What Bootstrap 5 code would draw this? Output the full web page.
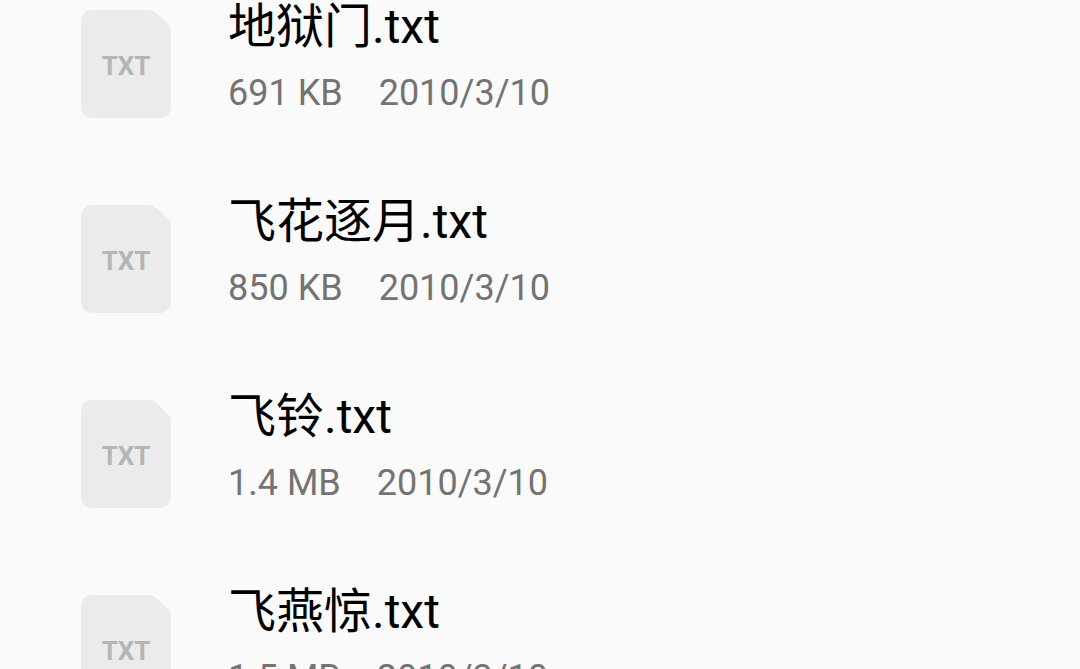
<!DOCTYPE html>
<html lang="zh-CN">
<head>
<meta charset="utf-8">
<meta name="viewport" content="width=device-width, initial-scale=1">
<title>TXT</title>
<link href="https://cdn.jsdelivr.net/npm/bootstrap@5.3.0/dist/css/bootstrap.min.css" rel="stylesheet">
<style>
body { background: #fafafa; font-family: Roboto, "Noto Sans CJK SC", sans-serif; }
.file-list { height: 100vh; }
.file-row { gap: 56px; height: 195px; padding: 0 80px; }
.file-icon { width: 92px; height: 108px; margin-top: 10px; }
.file-icon text { font: 700 26px Roboto, sans-serif; fill: #b5b5b5; }
.file-name { font-size: 48px; line-height: 54px; color: #000; }
.file-meta { gap: 36px; font-size: 36px; line-height: 42px; color: #737373; margin-top: 18px; }
</style>
</head>
<body>
<svg class="d-none" aria-hidden="true">
<symbol id="txt" viewBox="0 0 92 108"><path fill="#ebebeb" d="M13 0H69Q73 0 76 3L88 14Q91 17 91 21V95Q91 108 78 108H14Q1 108 1 95V13Q1 0 13 0Z"/></symbol>
</svg>
<main class="file-list overflow-hidden">
<ul class="list-unstyled mb-0">
<li class="file-row d-flex align-items-start"><svg class="file-icon flex-shrink-0" viewBox="0 0 92 108"><use href="#txt"/><text x="46" y="65" text-anchor="middle">TXT</text></svg><div><div class="file-name">地狱门.txt</div><div class="file-meta d-flex"><span>691 KB</span><span>2010/3/10</span></div></div></li>
<li class="file-row d-flex align-items-start"><svg class="file-icon flex-shrink-0" viewBox="0 0 92 108"><use href="#txt"/><text x="46" y="65" text-anchor="middle">TXT</text></svg><div><div class="file-name">飞花逐月.txt</div><div class="file-meta d-flex"><span>850 KB</span><span>2010/3/10</span></div></div></li>
<li class="file-row d-flex align-items-start"><svg class="file-icon flex-shrink-0" viewBox="0 0 92 108"><use href="#txt"/><text x="46" y="65" text-anchor="middle">TXT</text></svg><div><div class="file-name">飞铃.txt</div><div class="file-meta d-flex"><span>1.4 MB</span><span>2010/3/10</span></div></div></li>
<li class="file-row d-flex align-items-start"><svg class="file-icon flex-shrink-0" viewBox="0 0 92 108"><use href="#txt"/><text x="46" y="65" text-anchor="middle">TXT</text></svg><div><div class="file-name">飞燕惊.txt</div><div class="file-meta d-flex"><span>1.5 MB</span><span>2010/3/10</span></div></div></li>
</ul>
</main>
<script src="https://cdn.jsdelivr.net/npm/bootstrap@5.3.0/dist/js/bootstrap.bundle.min.js"></script>
</body>
</html>
